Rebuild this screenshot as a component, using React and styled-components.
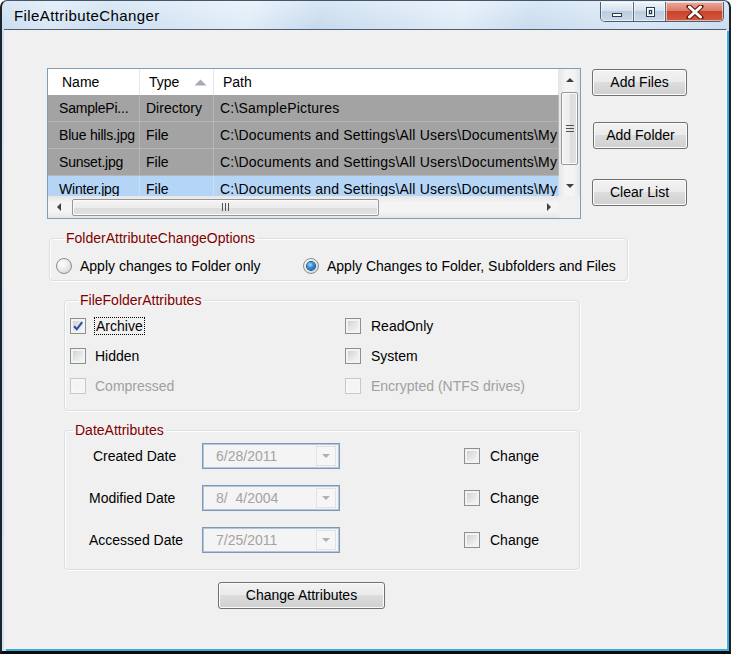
import React from 'react';
import styled, { createGlobalStyle } from 'styled-components';

const Global = createGlobalStyle`
  html, body { margin: 0; padding: 0; background: #ffffff; }
  body { width: 731px; height: 654px; overflow: hidden; font-family: "Liberation Sans", Arial, sans-serif; font-size: 14px; color: #000; }
  * { box-sizing: border-box; }
`;

const Window = styled.div`
  width: 731px;
  height: 654px;
  border-top: 1px solid #44566a;
  border-left: 2px solid #1e2329;
  border-right: 2px solid #1e2329;
  border-bottom: 3px solid #0b0b0b;
  border-radius: 7px 7px 0 0;
  background: linear-gradient(180deg, rgba(255,255,255,0.35) 0px, rgba(255,255,255,0) 28px),
    linear-gradient(104deg, #c6dbef 0%, #d9e8f6 6%, #c9ddf0 12%, #e0ecf8 28%, #c5daee 36%, #dfebf7 52%, #c7dbef 60%, #d8e7f5 72%, #c9ddf0 82%, #d6e5f4 100%);
  display: flex;
  flex-direction: column;
  overflow: hidden;
`;

const TitleBar = styled.div`
  height: 28px;
  display: flex;
  align-items: flex-start;
  flex: none;
`;

const Title = styled.div`
  margin: 6px 0 0 12px;
  font-size: 15px;
  letter-spacing: 0.4px;
  line-height: 18px;
  color: #000;
`;

const Caption = styled.div`
  margin: 1px 5px 0 auto;
  display: flex;
  height: 20px;
  border: 1px solid #4d5e72;
  border-top: none;
  border-radius: 0 0 5px 5px;
  overflow: hidden;
`;

const CapBtn = styled.div`
  width: ${p => p.$w}px;
  height: 100%;
  display: flex;
  align-items: center;
  justify-content: center;
  border-left: ${p => (p.$first ? 'none' : '1px solid #5a6b80')};
  background: ${p => p.$close
    ? 'linear-gradient(180deg, #e9a99a 0%, #dc7c67 45%, #c9432b 50%, #d25a3c 100%)'
    : 'linear-gradient(180deg, #eef3f9 0%, #d7e2ee 45%, #bccddf 50%, #cad9e9 100%)'};
  box-shadow: inset 0 0 0 1px rgba(255,255,255,0.55);
`;

const Client = styled.div`
  flex: 1;
  margin: 0 2px 2px 2px;
  background: #f0f0f0;
  border-top: 1px solid #4f5d6c;
  border-right: 1px solid #ffffff;
  box-shadow: 2px 2px 0 #36aee2;
  display: flex;
  flex-direction: column;
  align-items: flex-start;
`;

const TopRow = styled.div`
  display: flex;
  align-items: flex-start;
  margin: 38px 0 0 43px;
`;

const ListView = styled.div`
  width: 534px;
  height: 151px;
  border: 1px solid #7f9db9;
  background: #ffffff;
  display: grid;
  grid-template-columns: 511px 21px;
  grid-template-rows: 127px 22px;
`;

const TableArea = styled.div`
  overflow: hidden;
`;

const Header = styled.div`
  display: flex;
  height: 26px;
  background: #ffffff;
`;

const HeaderCell = styled.div`
  flex: none;
  width: ${p => p.$w}px;
  padding-left: ${p => p.$pl}px;
  display: flex;
  align-items: center;
  height: 26px;
  border-right: 1px solid #e3e6ea;
  white-space: nowrap;
`;

const SortArrow = styled.svg`
  margin-left: auto;
  margin-right: 6px;
`;

const Row = styled.div`
  display: flex;
  height: 27px;
  background: ${p => (p.$blue ? '#b5d5f7' : '#a3a3a3')};
  border-bottom: 1px solid ${p => (p.$blue ? '#c9dff5' : '#b6b6b6')};
`;

const Cell = styled.div`
  flex: none;
  width: ${p => p.$w}px;
  padding-left: ${p => p.$pl}px;
  line-height: 27px;
  letter-spacing: ${p => p.$ls || 0}px;
  white-space: nowrap;
  overflow: hidden;
  text-overflow: clip;
  border-right: 1px solid ${p => (p.$blue ? '#c9dff5' : '#b6b6b6')};
`;

const VScroll = styled.div`
  display: flex;
  flex-direction: column;
  align-items: center;
  background: linear-gradient(90deg, #e6e6e6 0%, #f4f4f4 30%, #f4f4f4 70%, #e6e6e6 100%);
`;

const HScroll = styled.div`
  display: flex;
  align-items: center;
  background: linear-gradient(180deg, #e6e6e6 0%, #f4f4f4 30%, #f4f4f4 70%, #e6e6e6 100%);
`;

const ScrollCorner = styled.div`
  background: #f0f0f0;
`;

const ArrowBtn = styled.div`
  flex: none;
  width: 21px;
  height: 21px;
  display: flex;
  align-items: center;
  justify-content: center;
`;

const VThumb = styled.div`
  width: 17px;
  height: 73px;
  margin-top: 2px;
  border: 1px solid #979797;
  border-radius: 2px;
  background: linear-gradient(90deg, #f4f4f4 0%, #ececec 50%, #dcdcdc 51%, #e2e2e2 100%);
  box-shadow: inset 0 0 0 1px #fbfbfb;
  display: flex;
  align-items: center;
  justify-content: center;
`;

const HThumb = styled.div`
  width: 307px;
  height: 17px;
  margin-left: 3px;
  border: 1px solid #979797;
  border-radius: 2px;
  background: linear-gradient(180deg, #f4f4f4 0%, #ececec 50%, #dcdcdc 51%, #e2e2e2 100%);
  box-shadow: inset 0 0 0 1px #fbfbfb;
  display: flex;
  align-items: center;
  justify-content: center;
`;

const Spacer = styled.div`
  flex: 1;
`;

const ButtonCol = styled.div`
  display: flex;
  flex-direction: column;
  align-items: flex-start;
  margin-left: 11px;
`;

const Button = styled.button`
  width: ${p => p.$w || 95}px;
  height: 27px;
  margin: ${p => p.$mt || 0}px 0 0 ${p => p.$ml || 0}px;
  padding: 0;
  border: 1px solid #707070;
  border-radius: 3px;
  background: linear-gradient(180deg, #f2f2f2 0%, #ebebeb 48%, #dddddd 50%, #cfcfcf 100%);
  box-shadow: inset 0 0 0 1px #fcfcfc;
  font-family: "Liberation Sans", Arial, sans-serif;
  font-size: 14px;
  color: #000;
  line-height: 25px;
  text-align: center;
`;

const Group = styled.fieldset`
  margin: ${p => p.$mt}px 0 0 ${p => p.$ml}px;
  width: ${p => p.$w}px;
  min-inline-size: 0;
  border: 1px solid #d5dfe5;
  border-radius: 4px;
  box-shadow: inset 1px 1px 0 #ffffff, 1px 1px 0 #ffffff;
  padding: ${p => p.$pad};
`;

const Legend = styled.legend`
  margin-left: 8px;
  padding: 0 2px;
  color: #800000;
  font-size: 14px;
  line-height: 16px;
`;

const OptionRow = styled.div`
  display: flex;
  align-items: center;
  height: 16px;
`;

const Option = styled.label`
  display: flex;
  align-items: center;
  gap: 8px;
  width: ${p => (p.$w ? `${p.$w}px` : 'auto')};
  line-height: 16px;
  white-space: nowrap;
`;

const RadioCircle = styled.span`
  flex: none;
  width: 16px;
  height: 16px;
  border-radius: 50%;
  border: 1px solid #8c8c8c;
  background: radial-gradient(circle at 35% 35%, #ffffff 0%, #eeeeee 40%, #cfcfcf 100%);
  display: flex;
  align-items: center;
  justify-content: center;
`;

const RadioDot = styled.span`
  width: 8px;
  height: 8px;
  border-radius: 50%;
  background: radial-gradient(circle at 40% 35%, #9be3ff 0%, #2b8ae0 45%, #0f4a9a 100%);
  box-shadow: 0 0 0 1px #244a7a;
`;

const AttrGrid = styled.div`
  display: grid;
  grid-template-columns: 275px auto;
  row-gap: 14px;
`;

const CheckItem = styled.div`
  display: flex;
  align-items: center;
  gap: ${p => p.$gap || 9}px;
  height: 16px;
  line-height: 16px;
  white-space: nowrap;
  color: ${p => (p.$disabled ? '#a0a0a0' : '#000')};
`;

const Box = styled.span`
  flex: none;
  width: 16px;
  height: 16px;
  border: 1px solid ${p => (p.$disabled ? '#c8c8c8' : '#8e8f8f')};
  background: ${p => (p.$disabled
    ? '#f4f4f4'
    : 'linear-gradient(135deg, #c6c9cd 0%, #e4e5e7 50%, #fbfbfb 100%)')};
  box-shadow: inset 0 0 0 2px ${p => (p.$disabled ? '#f7f7f7' : '#f3f3f3')};
  display: flex;
  align-items: center;
  justify-content: center;
`;

const FocusText = styled.span`
  outline: 1px dotted #000;
  outline-offset: 0;
  padding: 0 1px;
`;

const DateRows = styled.div`
  display: flex;
  flex-direction: column;
  gap: 16px;
`;

const DateRow = styled.div`
  display: grid;
  grid-template-columns: 137px 138px 124px auto;
  align-items: center;
  height: 26px;
`;

const DateLabel = styled.div`
  padding-left: ${p => p.$pl}px;
  white-space: nowrap;
`;

const DateBox = styled.div`
  width: 138px;
  height: 26px;
  border: 1px solid #7b98b7;
  box-shadow: inset 0 0 0 1px #b4c6d9;
  background: #f4f4f4;
  display: flex;
  align-items: center;
  padding-left: 13px;
  color: #a3a3a3;
  white-space: pre;
`;

const DropBtn = styled.span`
  margin-left: auto;
  margin-right: 3px;
  width: 20px;
  height: 20px;
  border: 1px solid #e2e2e2;
  background: #f6f6f6;
  display: flex;
  align-items: center;
  justify-content: center;
`;

const Check = () => (
  <svg width="12" height="12" viewBox="0 0 12 12">
    <path d="M2 6.2 L4.8 9.2 L10.2 2.2" fill="none" stroke="#2a4ea6" strokeWidth="2" />
  </svg>
);

const Tri = ({ dir, color = '#404040' }) => {
  const pts = {
    up: '0,5 4,1 8,5',
    down: '0,1 4,5 8,1',
    left: '5,0 1,4 5,8',
    right: '1,0 5,4 1,8',
  }[dir];
  const vert = dir === 'up' || dir === 'down';
  return (
    <svg width={vert ? 8 : 6} height={vert ? 6 : 8} viewBox={vert ? '0 0 8 6' : '0 0 6 8'}>
      <polygon points={pts} fill={color} />
    </svg>
  );
};

const CheckBox = ({ label, checked, disabled, focus, gap }) => (
  <CheckItem $disabled={disabled} $gap={gap}>
    <Box $disabled={disabled}>{checked && <Check />}</Box>
    {focus ? <FocusText>{label}</FocusText> : <span>{label}</span>}
  </CheckItem>
);

const cols = [
  { w: 92, pl: 11, hpl: 14, ls: -0.2 },
  { w: 74, pl: 6, hpl: 9, ls: 0 },
  { w: 345, pl: 6, hpl: 9, ls: 0.2 },
];

const rows = [
  ['SamplePi...', 'Directory', 'C:\\SamplePictures'],
  ['Blue hills.jpg', 'File', 'C:\\Documents and Settings\\All Users\\Documents\\My'],
  ['Sunset.jpg', 'File', 'C:\\Documents and Settings\\All Users\\Documents\\My'],
  ['Winter.jpg', 'File', 'C:\\Documents and Settings\\All Users\\Documents\\My'],
];

const dates = [
  { label: 'Created Date', pl: 28, value: '6/28/2011' },
  { label: 'Modified Date', pl: 24, value: '8/  4/2004' },
  { label: 'Accessed Date', pl: 24, value: '7/25/2011' },
];

export default function App() {
  return (
    <>
      <Global />
      <Window>
        <TitleBar>
          <Title>FileAttributeChanger</Title>
          <Caption>
            <CapBtn $w={32} $first>
              <svg width="12" height="12" viewBox="0 0 12 12">
                <rect x="1.5" y="7.5" width="9" height="3" fill="#ffffff" stroke="#2b3a4d" />
              </svg>
            </CapBtn>
            <CapBtn $w={32}>
              <svg width="12" height="12" viewBox="0 0 12 12">
                <rect x="2.5" y="1.5" width="8" height="9" fill="none" stroke="#2b3a4d" />
                <rect x="3.5" y="2.5" width="6" height="7" fill="none" stroke="#ffffff" />
                <rect x="5.5" y="4.5" width="2" height="3" fill="#cad8e8" stroke="#2b3a4d" />
              </svg>
            </CapBtn>
            <CapBtn $w={58} $close>
              <svg width="18" height="14" viewBox="0 0 18 14">
                <path d="M3 1.5 L15 12.5 M15 1.5 L3 12.5" stroke="#5a1a10" strokeWidth="5" strokeLinecap="round" />
                <path d="M3.5 2 L14.5 12 M14.5 2 L3.5 12" stroke="#ffffff" strokeWidth="3" strokeLinecap="round" />
              </svg>
            </CapBtn>
          </Caption>
        </TitleBar>
        <Client>
          <TopRow>
            <ListView>
              <TableArea>
                <Header>
                  <HeaderCell $w={cols[0].w} $pl={cols[0].hpl}>Name</HeaderCell>
                  <HeaderCell $w={cols[1].w} $pl={cols[1].hpl}>
                    Type
                    <SortArrow width="13" height="7" viewBox="0 0 13 7">
                      <polygon points="0.5,6.5 6.5,0.5 12.5,6.5" fill="#a5acb5" />
                    </SortArrow>
                  </HeaderCell>
                  <HeaderCell $w={cols[2].w} $pl={cols[2].hpl}>Path</HeaderCell>
                </Header>
                {rows.map((r, i) => {
                  const blue = i === 3;
                  return (
                    <Row key={i} $blue={blue}>
                      {r.map((t, j) => (
                        <Cell key={j} $w={cols[j].w} $pl={cols[j].pl} $ls={cols[j].ls} $blue={blue}>{t}</Cell>
                      ))}
                    </Row>
                  );
                })}
              </TableArea>
              <VScroll>
                <ArrowBtn><Tri dir="up" /></ArrowBtn>
                <VThumb>
                  <svg width="8" height="7" viewBox="0 0 8 7">
                    <path d="M0 0.5 H8 M0 3.5 H8 M0 6.5 H8" stroke="#505050" strokeWidth="1" />
                  </svg>
                </VThumb>
                <Spacer />
                <ArrowBtn><Tri dir="down" /></ArrowBtn>
              </VScroll>
              <HScroll>
                <ArrowBtn><Tri dir="left" /></ArrowBtn>
                <HThumb>
                  <svg width="7" height="8" viewBox="0 0 7 8">
                    <path d="M0.5 0 V8 M3.5 0 V8 M6.5 0 V8" stroke="#505050" strokeWidth="1" />
                  </svg>
                </HThumb>
                <Spacer />
                <ArrowBtn><Tri dir="right" /></ArrowBtn>
              </HScroll>
              <ScrollCorner />
            </ListView>
            <ButtonCol>
              <Button $mt={1}>Add Files</Button>
              <Button $mt={26} $ml={1}>Add Folder</Button>
              <Button $mt={30}>Clear List</Button>
            </ButtonCol>
          </TopRow>

          <Group $mt={11} $ml={45} $w={579} $pad="12px 0 6px 6px">
            <Legend>FolderAttributeChangeOptions</Legend>
            <OptionRow>
              <Option $w={247}>
                <RadioCircle />
                Apply changes to Folder only
              </Option>
              <Option>
                <RadioCircle><RadioDot /></RadioCircle>
                Apply Changes to Folder, Subfolders and Files
              </Option>
            </OptionRow>
          </Group>

          <Group $mt={11} $ml={60} $w={516} $pad="10px 0 16px 5px">
            <Legend>FileFolderAttributes</Legend>
            <AttrGrid>
              <CheckBox label="Archive" checked focus />
              <CheckBox label="ReadOnly" gap={10} />
              <CheckBox label="Hidden" />
              <CheckBox label="System" gap={10} />
              <CheckBox label="Compressed" disabled />
              <CheckBox label="Encrypted (NTFS drives)" disabled gap={10} />
            </AttrGrid>
          </Group>

          <Group $mt={11} $ml={60} $w={516} $pad="5px 0 16px 0">
            <Legend>DateAttributes</Legend>
            <DateRows>
              {dates.map(d => (
                <DateRow key={d.label}>
                  <DateLabel $pl={d.pl}>{d.label}</DateLabel>
                  <DateBox>
                    {d.value}
                    <DropBtn><Tri dir="down" color="#b0b0b0" /></DropBtn>
                  </DateBox>
                  <span />
                  <CheckBox label="Change" gap={10} />
                </DateRow>
              ))}
            </DateRows>
          </Group>

          <Button $w={167} $mt={12} $ml={214}>Change Attributes</Button>
        </Client>
      </Window>
    </>
  );
}
